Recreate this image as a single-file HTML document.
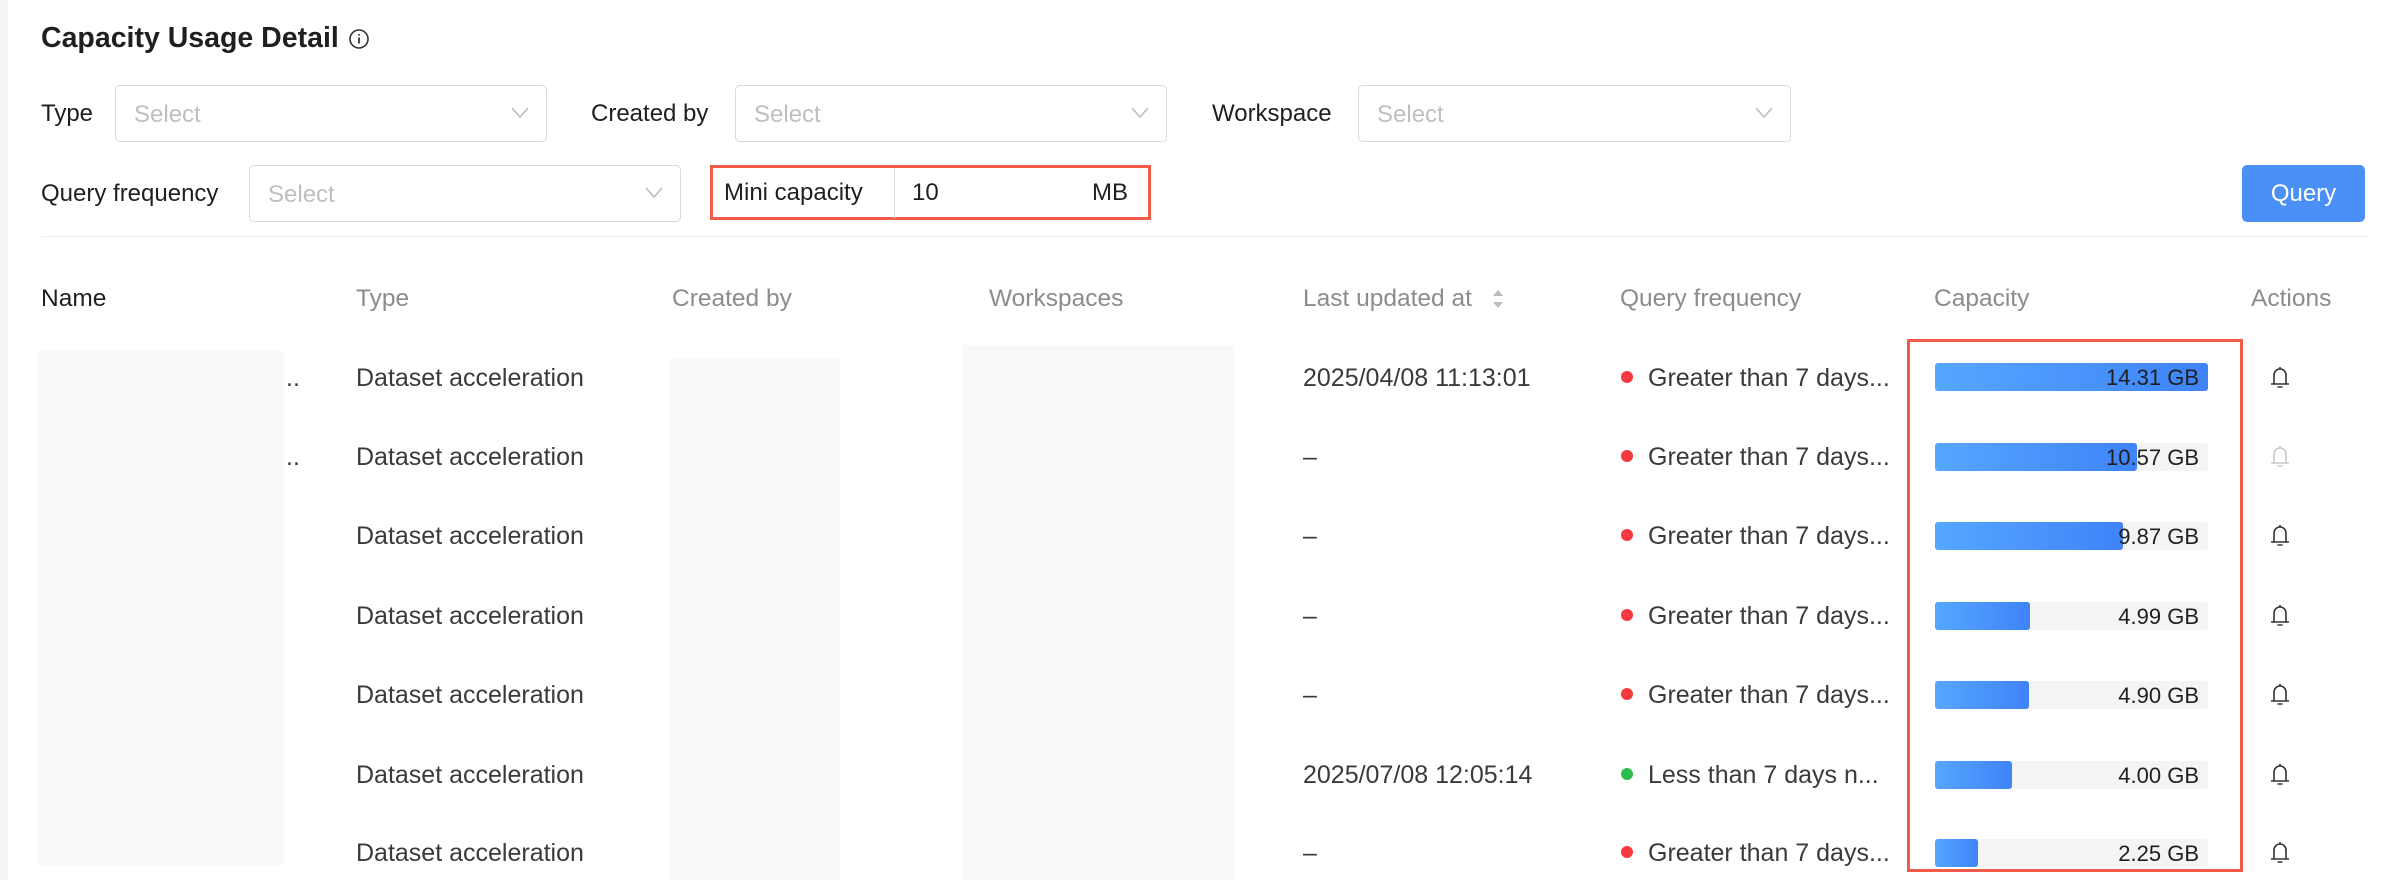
<!DOCTYPE html>
<html><head><style>
*{box-sizing:border-box;margin:0;padding:0}
body{width:2396px;height:880px;background:#fff;font-family:"Liberation Sans",Arial,sans-serif;position:relative;overflow:hidden;color:#1f1f1f}
.a{position:absolute;white-space:nowrap}
.lbl{font-size:24px;color:#1f1f1f}
.sel{position:absolute;border:1.5px solid #d9d9d9;border-radius:5px;height:57px}
.sel span{position:absolute;left:18px;top:15px;font-size:24px;color:#bfbfbf}
.sel svg{position:absolute;right:16px;top:20px}
.hd{font-size:24.5px;color:#8c8c8c;top:285px}
.cell{font-size:25px;color:#3a3a3a}
.bar{position:absolute;left:1935px;width:273px;height:28px;background:#f4f4f4;border-radius:3px}
.bar i{position:absolute;left:0;top:0;bottom:0;border-radius:3px;background:linear-gradient(90deg,#55a7ff,#3f83f8)}
.bar b{position:absolute;right:9px;top:2px;font-weight:normal;font-size:22px;color:#1f1f1f}
.dot{position:absolute;width:12px;height:12px;border-radius:50%}
.bell{position:absolute;left:2268px}
</style></head><body>
<div class="a" style="left:0;top:0;width:8px;height:880px;background:#f5f5f5"></div>
<div class="a" style="left:41px;top:22px;font-size:28.5px;font-weight:bold">Capacity Usage Detail</div>
<svg class="a" style="left:348px;top:28px" width="22" height="22" viewBox="0 0 22 22"><circle cx="11" cy="11" r="9" fill="none" stroke="#333" stroke-width="1.6"/><path d="M11 9.5v6M11 6v1.5" stroke="#333" stroke-width="1.8"/></svg>

<div class="a lbl" style="left:41px;top:100px">Type</div>
<div class="sel" style="left:115px;top:85px;width:432px"><span>Select</span><svg width="20" height="14"><path d="M2 2l8 9 8-9" fill="none" stroke="#bbb" stroke-width="1.5"/></svg></div>
<div class="a lbl" style="left:591px;top:100px">Created by</div>
<div class="sel" style="left:735px;top:85px;width:432px"><span>Select</span><svg width="20" height="14"><path d="M2 2l8 9 8-9" fill="none" stroke="#bbb" stroke-width="1.5"/></svg></div>
<div class="a lbl" style="left:1212px;top:100px">Workspace</div>
<div class="sel" style="left:1358px;top:85px;width:433px"><span>Select</span><svg width="20" height="14"><path d="M2 2l8 9 8-9" fill="none" stroke="#bbb" stroke-width="1.5"/></svg></div>

<div class="a lbl" style="left:41px;top:180px">Query frequency</div>
<div class="sel" style="left:249px;top:165px;width:432px"><span>Select</span><svg width="20" height="14"><path d="M2 2l8 9 8-9" fill="none" stroke="#bbb" stroke-width="1.5"/></svg></div>
<div class="a" style="left:710px;top:165px;width:441px;height:55px;border:3px solid #f25a4a"></div>
<div class="a lbl" style="left:724px;top:179px">Mini capacity</div>
<div class="a" style="left:894px;top:168px;width:1px;height:50px;background:#d9d9d9"></div>
<div class="a lbl" style="left:912px;top:179px">10</div>
<div class="a lbl" style="left:1092px;top:179px">MB</div>
<div class="a" style="left:2242px;top:165px;width:123px;height:57px;background:#4a90f7;border-radius:5px;color:#fff;font-size:24px;text-align:center;line-height:57px">Query</div>
<div class="a" style="left:41px;top:236px;width:2327px;height:1px;background:#ededed"></div>

<div class="a hd" style="left:41px;color:#1f1f1f">Name</div>
<div class="a hd" style="left:356px">Type</div>
<div class="a hd" style="left:672px">Created by</div>
<div class="a hd" style="left:989px">Workspaces</div>
<div class="a hd" style="left:1303px">Last updated at</div>
<svg class="a" style="left:1491px;top:286px" width="14" height="26"><path d="M2 10l5-6 5 6zM2 16l5 6 5-6z" fill="#bbb"/></svg>
<div class="a hd" style="left:1620px">Query frequency</div>
<div class="a hd" style="left:1934px">Capacity</div>
<div class="a hd" style="left:2251px">Actions</div>

<div class="a" style="left:37px;top:351px;width:247px;height:514px;background:#f9f9f9"></div>
<div class="a" style="left:669px;top:359px;width:171px;height:521px;background:#f9f9f9"></div>
<div class="a" style="left:963px;top:345px;width:272px;height:535px;background:#f9f9f9"></div>
<div class="a cell" style="left:286px;top:364px">..</div>
<div class="a cell" style="left:286px;top:443px">..</div>

<div class="a" style="left:1907px;top:339px;width:336px;height:533px;border:3px solid #f25a4a"></div>

<div class="a cell" style="left:356px;top:364px">Dataset acceleration</div>
<div class="a cell" style="left:356px;top:443px">Dataset acceleration</div>
<div class="a cell" style="left:356px;top:522px">Dataset acceleration</div>
<div class="a cell" style="left:356px;top:602px">Dataset acceleration</div>
<div class="a cell" style="left:356px;top:681px">Dataset acceleration</div>
<div class="a cell" style="left:356px;top:761px">Dataset acceleration</div>
<div class="a cell" style="left:356px;top:839px">Dataset acceleration</div>

<div class="a cell" style="left:1303px;top:364px">2025/04/08 11:13:01</div>
<div class="a cell" style="left:1303px;top:443px">–</div>
<div class="a cell" style="left:1303px;top:522px">–</div>
<div class="a cell" style="left:1303px;top:602px">–</div>
<div class="a cell" style="left:1303px;top:681px">–</div>
<div class="a cell" style="left:1303px;top:761px">2025/07/08 12:05:14</div>
<div class="a cell" style="left:1303px;top:839px">–</div>

<div class="dot" style="left:1621px;top:371px;background:#f5393d"></div><div class="a cell" style="left:1648px;top:364px">Greater than 7 days...</div>
<div class="dot" style="left:1621px;top:450px;background:#f5393d"></div><div class="a cell" style="left:1648px;top:443px">Greater than 7 days...</div>
<div class="dot" style="left:1621px;top:529px;background:#f5393d"></div><div class="a cell" style="left:1648px;top:522px">Greater than 7 days...</div>
<div class="dot" style="left:1621px;top:609px;background:#f5393d"></div><div class="a cell" style="left:1648px;top:602px">Greater than 7 days...</div>
<div class="dot" style="left:1621px;top:688px;background:#f5393d"></div><div class="a cell" style="left:1648px;top:681px">Greater than 7 days...</div>
<div class="dot" style="left:1621px;top:768px;background:#2dbd4c"></div><div class="a cell" style="left:1648px;top:761px">Less than 7 days n...</div>
<div class="dot" style="left:1621px;top:846px;background:#f5393d"></div><div class="a cell" style="left:1648px;top:839px">Greater than 7 days...</div>

<div class="bar" style="top:363px"><i style="width:273px"></i><b>14.31 GB</b></div>
<div class="bar" style="top:443px"><i style="width:202px"></i><b>10.57 GB</b></div>
<div class="bar" style="top:522px"><i style="width:188px"></i><b>9.87 GB</b></div>
<div class="bar" style="top:602px"><i style="width:95px"></i><b>4.99 GB</b></div>
<div class="bar" style="top:681px"><i style="width:94px"></i><b>4.90 GB</b></div>
<div class="bar" style="top:761px"><i style="width:77px"></i><b>4.00 GB</b></div>
<div class="bar" style="top:839px"><i style="width:43px"></i><b>2.25 GB</b></div>

<svg class="bell" style="top:364px" width="24" height="26" viewBox="0 0 24 26" fill="none" stroke="#333" stroke-width="1.6"><path d="M3 20h18M6 20V11a6 6 0 0 1 12 0v9M9.5 23h5M12 3v2"/></svg>
<svg class="bell" style="top:443px" width="24" height="26" viewBox="0 0 24 26" fill="none" stroke="#c8c8c8" stroke-width="1.6"><path d="M3 20h18M6 20V11a6 6 0 0 1 12 0v9M9.5 23h5M12 3v2"/></svg>
<svg class="bell" style="top:522px" width="24" height="26" viewBox="0 0 24 26" fill="none" stroke="#333" stroke-width="1.6"><path d="M3 20h18M6 20V11a6 6 0 0 1 12 0v9M9.5 23h5M12 3v2"/></svg>
<svg class="bell" style="top:602px" width="24" height="26" viewBox="0 0 24 26" fill="none" stroke="#333" stroke-width="1.6"><path d="M3 20h18M6 20V11a6 6 0 0 1 12 0v9M9.5 23h5M12 3v2"/></svg>
<svg class="bell" style="top:681px" width="24" height="26" viewBox="0 0 24 26" fill="none" stroke="#333" stroke-width="1.6"><path d="M3 20h18M6 20V11a6 6 0 0 1 12 0v9M9.5 23h5M12 3v2"/></svg>
<svg class="bell" style="top:761px" width="24" height="26" viewBox="0 0 24 26" fill="none" stroke="#333" stroke-width="1.6"><path d="M3 20h18M6 20V11a6 6 0 0 1 12 0v9M9.5 23h5M12 3v2"/></svg>
<svg class="bell" style="top:839px" width="24" height="26" viewBox="0 0 24 26" fill="none" stroke="#333" stroke-width="1.6"><path d="M3 20h18M6 20V11a6 6 0 0 1 12 0v9M9.5 23h5M12 3v2"/></svg>
</body></html>
